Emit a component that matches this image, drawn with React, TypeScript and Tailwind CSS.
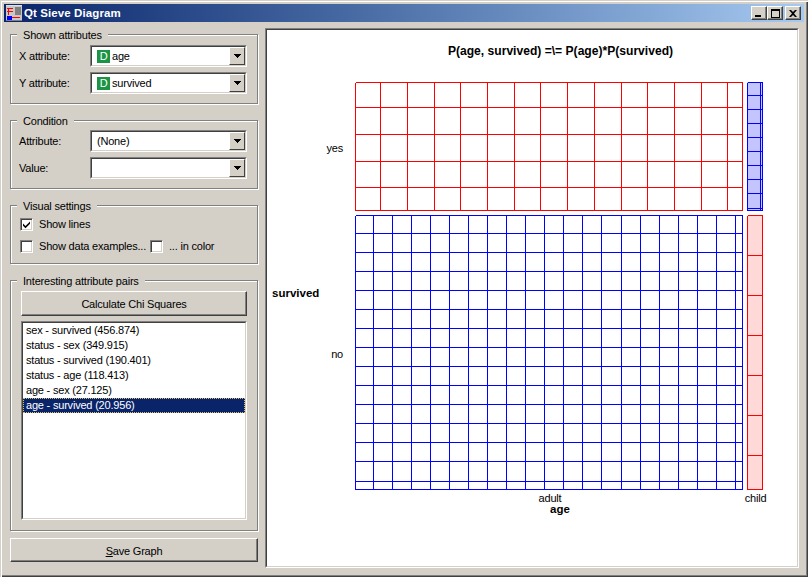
import React from "react";

const redV = [355, 380, 407, 434, 460, 487, 514, 540, 567, 594, 621, 647, 674, 701, 727, 742];
const redH = [82, 107, 134, 161, 187, 210];
const blueV = [355, 373, 392, 411, 430, 449, 468, 487, 506, 525, 544, 563, 582, 601, 621, 640, 659, 678, 697, 716, 735, 742];
const blueH = [215, 233, 252, 271, 290, 309, 328, 347, 366, 385, 404, 423, 442, 461, 481, 489];
const sideBlue = [82, 95, 109, 123, 137, 151, 165, 179, 193, 208, 210];
const sideRed = [215, 255, 295, 335, 375, 415, 455, 489];

function Grid({ xs, ys, color }: { xs: number[]; ys: number[]; color: string }) {
  const x0 = xs[0] + 0.5, x1 = xs[xs.length - 1] + 0.5, y0 = ys[0] + 0.5, y1 = ys[ys.length - 1] + 0.5;
  return (
    <g stroke={color} strokeWidth={1} shapeRendering="crispEdges">
      {xs.map((x) => <line key={"v" + x} x1={x + 0.5} x2={x + 0.5} y1={y0} y2={y1} />)}
      {ys.map((y) => <line key={"h" + y} x1={x0} x2={x1} y1={y + 0.5} y2={y + 0.5} />)}
    </g>
  );
}

function Chart() {
  return (
    <svg width={530} height={536} viewBox="267 30 530 536" className="block font-['Liberation_Sans',sans-serif]">
      <rect x={747} y={82} width={15} height={128} fill="#c4c4ff" />
      <rect x={747} y={215} width={15} height={274} fill="#ffd8d8" />
      <Grid xs={redV} ys={redH} color="#ff0000" />
      <Grid xs={blueV} ys={blueH} color="#0000ff" />
      <Grid xs={[747, 760, 762]} ys={sideBlue} color="#0000ff" />
      <Grid xs={[747, 762]} ys={sideRed} color="#ff0000" />
      <g fontSize={11} letterSpacing={-0.2} fill="#000">
        <text x={560.5} y={54.5} textAnchor="middle" fontWeight="bold" fontSize={12.1} letterSpacing={0}>{"P(age, survived) =\\= P(age)*P(survived)"}</text>
        <text x={343} y={152} textAnchor="end">yes</text>
        <text x={343} y={358} textAnchor="end">no</text>
        <text x={272} y={297} fontWeight="bold" fontSize={11.5} letterSpacing={0}>survived</text>
        <text x={550} y={502} textAnchor="middle">adult</text>
        <text x={560} y={513} textAnchor="middle" fontWeight="bold" fontSize={11.5} letterSpacing={0}>age</text>
        <text x={755.5} y={502} textAnchor="middle">child</text>
      </g>
    </svg>
  );
}

function Combo({ badge, text }: { badge?: boolean; text?: string }) {
  return (
    <div className="flex h-[22px] w-[157px] border border-t-[#808080] border-l-[#808080] border-r-white border-b-white bg-white">
      <div className="flex min-w-0 flex-1 items-center gap-[2px] border border-t-[#404040] border-l-[#404040] border-r-[#d4d0c8] border-b-[#d4d0c8] pl-[5px]">
        {badge && (
          <span className="flex h-[13px] w-[13px] items-center justify-center bg-[#1c9445] text-[11px] leading-none text-white">D</span>
        )}
        {text && <span className="text-black">{text}</span>}
        <div className="ml-auto flex h-[18px] w-[16px] items-center justify-center border-t border-l border-t-white border-l-white border-r border-b border-r-[#404040] border-b-[#404040] bg-[#d4d0c8]">
          <svg width="7" height="4" viewBox="0 0 7 4"><path d="M0 0h7L3.5 4z" fill="#000" shapeRendering="crispEdges" /></svg>
        </div>
      </div>
    </div>
  );
}

function Field({ label, badge, text }: { label: string; badge?: boolean; text?: string }) {
  return (
    <div className="flex items-center">
      <span className="w-[71px] text-black">{label}</span>
      <Combo badge={badge} text={text} />
    </div>
  );
}

function Group({ title, className, children }: { title: string; className: string; children: React.ReactNode }) {
  return (
    <section className={"relative border border-[#808080] shadow-[inset_1px_1px_0_#fff,1px_1px_0_#fff] " + className}>
      <span className="absolute left-[6px] top-[-7px] bg-[#d4d0c8] px-[6px] leading-[14px] text-black">{title}</span>
      {children}
    </section>
  );
}

function Check({ checked }: { checked?: boolean }) {
  return (
    <span className="flex h-[13px] w-[13px] shrink-0 items-center justify-center border border-t-[#808080] border-l-[#808080] border-r-white border-b-white bg-white shadow-[inset_1px_1px_0_#404040,inset_-1px_-1px_0_#d4d0c8]">
      {checked && (
        <svg width="9" height="9" viewBox="0 0 9 9"><path d="M1 3.5l2.5 2.5L8 1.5v2.2L3.5 8.2 1 5.700z" fill="#000" /></svg>
      )}
    </span>
  );
}

const raised = "border border-t-white border-l-white border-r-[#404040] border-b-[#404040] bg-[#d4d0c8] shadow-[inset_-1px_-1px_0_#808080]";

function WinBtn({ children, className = "" }: { children: React.ReactNode; className?: string }) {
  return <div className={"flex h-[14px] w-[16px] items-center justify-center " + raised + " " + className}>{children}</div>;
}

const pairs = ["sex - survived (456.874)", "status - sex (349.915)", "status - survived (190.401)", "status - age (118.413)", "age - sex (27.125)"];

export default function App() {
  return (
    <div className="flex h-[577px] w-[808px] flex-col bg-[#d4d0c8] p-[4px] text-[11px] leading-[15px] tracking-[-0.2px] whitespace-nowrap font-['Liberation_Sans',sans-serif] shadow-[inset_1px_1px_0_#d4d0c8,inset_2px_2px_0_#fff,inset_-1px_-1px_0_#404040,inset_-2px_-2px_0_#808080]">
      <header className="flex h-[18px] shrink-0 items-center bg-gradient-to-r from-[#0a246a] to-[#a6caf0] pl-[2px] pr-[3px]">
        <svg width="16" height="16" viewBox="0 0 16 16" className="shrink-0" shapeRendering="crispEdges">
          <rect width="16" height="16" fill="#c8c8c8" />
          <rect x="0" y="0" width="16" height="1" fill="#e0e0e0" />
          <rect x="0" y="15" width="16" height="1" fill="#808080" />
          <rect x="9" y="2" width="6" height="8" fill="#808080" />
          <path d="M2.500 3v7M1 6.500h6M1 3.500h6" stroke="#ff0000" fill="none" />
          <rect x="1" y="11" width="5" height="4" fill="#0000ff" />
          <rect x="6" y="12" width="8" height="1" fill="#ff0000" />
        </svg>
        <span className="ml-[2px] text-[11.5px] font-bold tracking-[0.1px] text-white">Qt Sieve Diagram</span>
        <div className="ml-auto flex items-center">
          <WinBtn><span className="mt-[6px] mr-[2px] block h-[2px] w-[6px] bg-black" /></WinBtn>
          <WinBtn><span className="block h-[9px] w-[9px] border border-t-2 border-black" /></WinBtn>
          <WinBtn className="ml-[2px]">
            <svg width="8" height="7" viewBox="0 0 8 7"><path d="M0 0h2l2 2 2-2h2L5 3.5 8 7H6L4 5 2 7H0l3-3.500z" fill="#000" /></svg>
          </WinBtn>
        </div>
      </header>

      <div className="flex min-h-0 flex-1 pt-[6px] pl-[6px] pr-[5px] pb-[5px]">
        <aside className="flex w-[248px] shrink-0 flex-col gap-[16px] pt-[6px]">
          <Group title="Shown attributes" className="h-[70px] shrink-0">
            <div className="flex flex-col gap-[5px] pt-[10px] pl-[8px]">
              <Field label="X attribute:" badge text="age" />
              <Field label="Y attribute:" badge text="survived" />
            </div>
          </Group>
          <Group title="Condition" className="h-[69px] shrink-0">
            <div className="flex flex-col gap-[5px] pt-[9px] pl-[8px]">
              <Field label="Attribute:" text="(None)" />
              <Field label="Value:" />
            </div>
          </Group>
          <Group title="Visual settings" className="h-[59px] shrink-0">
            <div className="flex flex-col gap-[7px] pt-[11px] pl-[9px]">
              <label className="flex items-center gap-[6px]"><Check checked /><span>Show lines</span></label>
              <div className="flex items-center">
                <Check /><span className="ml-[6px] w-[111px]">Show data examples...</span>
                <Check /><span className="ml-[6px]">... in color</span>
              </div>
            </div>
          </Group>
          <div className="flex flex-col">
            <Group title="Interesting attribute pairs" className="flex h-[251px] flex-col px-[10px] pt-[10px] pb-[10px]">
              <button className={"h-[25px] w-[226px] shrink-0 pt-[1px] text-center text-black " + raised}>Calculate Chi Squares</button>
              <div className="mt-[5px] h-[200px] w-[226px] border border-t-[#808080] border-l-[#808080] border-r-white border-b-white bg-white">
                <div className="h-full border border-t-[#404040] border-l-[#404040] border-r-[#d4d0c8] border-b-[#d4d0c8]">
                  {pairs.map((p) => <div key={p} className="h-[15px] pl-[3px] text-black">{p}</div>)}
                  <div className="h-[15px] border border-dotted border-[#d8c060] bg-[#0a246a] pl-[2px] leading-[13px] text-white">age - survived (20.956)</div>
                </div>
              </div>
            </Group>
            <button className={"mt-[7px] h-[24px] w-[248px] shrink-0 pt-[2px] text-center text-black " + raised}>
              <span className="underline">S</span>ave Graph
            </button>
          </div>
        </aside>
        <main className="ml-[7px] flex-1 border border-t-[#808080] border-l-[#808080] border-r-white border-b-white">
          <div className="h-full border border-t-[#404040] border-l-[#404040] border-r-[#d4d0c8] border-b-[#d4d0c8] bg-white">
            <Chart />
          </div>
        </main>
      </div>
    </div>
  );
}
